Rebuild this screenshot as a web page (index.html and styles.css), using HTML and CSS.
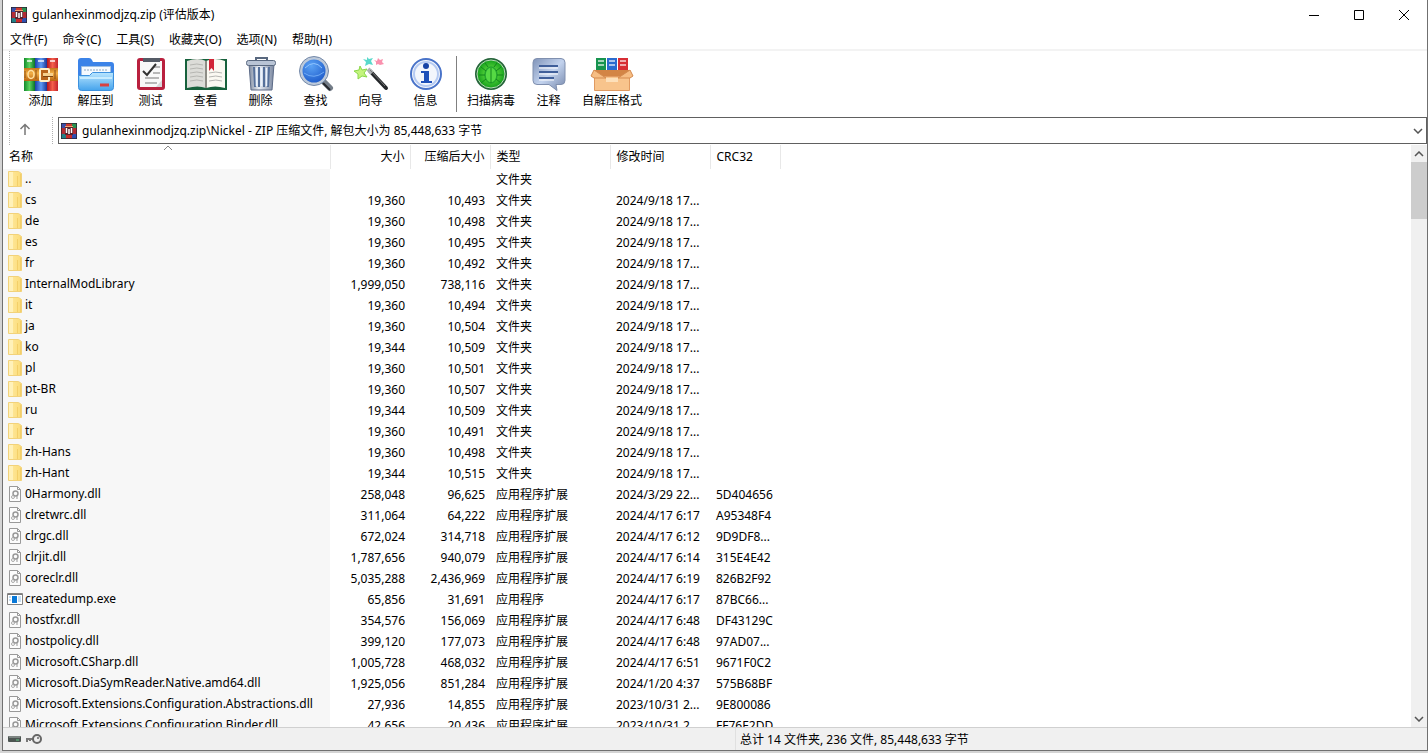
FILE: index.html
```html
<!DOCTYPE html>
<html lang="zh-CN">
<head>
  <meta charset="UTF-8">
  <meta name="viewport" content="width=device-width, initial-scale=1.0">
  <title>gulanhexinmodjzq.zip (评估版本)</title>
  <link rel="stylesheet" href="styles.css">
</head>
<body>
  <svg class="sprite" aria-hidden="true">
    <defs>
      <linearGradient id="g-red" x1="0" x2="1"><stop offset="0" stop-color="#b3141c"/><stop offset=".5" stop-color="#f4604c"/><stop offset="1" stop-color="#c3242c"/></linearGradient>
      <linearGradient id="g-green" x1="0" x2="1"><stop offset="0" stop-color="#128a2c"/><stop offset=".5" stop-color="#5cd25e"/><stop offset="1" stop-color="#0b7428"/></linearGradient>
      <linearGradient id="g-blue" x1="0" x2="1"><stop offset="0" stop-color="#1c3fa8"/><stop offset=".5" stop-color="#5d9af4"/><stop offset="1" stop-color="#1c3694"/></linearGradient>
      <linearGradient id="g-belt" x1="0" x2="0" y1="0" y2="1"><stop offset="0" stop-color="#c4761b"/><stop offset=".4" stop-color="#f3ae45"/><stop offset="1" stop-color="#b8630f"/></linearGradient>
      <linearGradient id="g-folder" x1="0" x2="0" y1="0" y2="1"><stop offset="0" stop-color="#b9e6ff"/><stop offset="1" stop-color="#45a3ec"/></linearGradient>
      <linearGradient id="g-steel" x1="0" x2="1"><stop offset="0" stop-color="#7f8ba0"/><stop offset=".4" stop-color="#e9eef5"/><stop offset="1" stop-color="#7a87a0"/></linearGradient>
      <radialGradient id="g-lens" cx=".4" cy=".3" r=".8"><stop offset="0" stop-color="#5ba3f5"/><stop offset="1" stop-color="#1450c4"/></radialGradient>
      <radialGradient id="g-virus"><stop offset="0" stop-color="#7cf04a"/><stop offset="1" stop-color="#14a01c"/></radialGradient>
      <linearGradient id="g-note" x1="0" x2="1" y1="0" y2="1"><stop offset="0" stop-color="#7f93b8"/><stop offset=".5" stop-color="#c3d3ee"/><stop offset="1" stop-color="#7486aa"/></linearGradient>
      <linearGradient id="g-yellow" x1="0" x2="1"><stop offset="0" stop-color="#ffe9a0"/><stop offset="1" stop-color="#fbdc78"/></linearGradient>
    </defs>
    <symbol id="i-rar" viewBox="0 0 34 34">
      <path fill="url(#g-green)" d="M0 1h11v11H0z"/><path fill="url(#g-blue)" d="M11 1h12v11H11z"/><path fill="url(#g-red)" d="M23 1h11v11H23z"/>
      <path fill="url(#g-green)" d="M0 22h11v12H0z"/><path fill="url(#g-blue)" d="M11 22h12v12H11z"/><path fill="url(#g-red)" d="M23 22h11v12H23z"/>
      <path d="M3 4h5M14 4h6M26 4h5" stroke="#fff" stroke-opacity=".7" stroke-width="2"/>
      <path fill="url(#g-belt)" d="M0 11h34v13H0z"/>
      <ellipse cx="7" cy="17.500" rx="3" ry="4" fill="none" stroke="#ffe0a0" stroke-width="1.500"/>
      <path stroke="#8b4e14" d="M1 14v7M12 13v9M31 13v9"/>
      <rect x="16" y="12" width="9" height="12" rx="1" fill="#b8651c" stroke="#fff0c8" stroke-width="2"/>
      <path fill="#f6d08d" d="M19 16h10v3H19z"/><path fill="#7b4412" d="M19 19h10v1H19z"/>
    </symbol>
    <symbol id="i-rar-small" viewBox="0 0 16 16">
      <path fill="#3d4fa8" d="M0 0h5v5H0z"/><path fill="#d03a30" d="M5 0h6v5H5z"/><path fill="#2b9150" d="M11 0h5v5h-5z"/>
      <path fill="#b32c34" d="M0 5h16v6H0z"/><path fill="#227f86" d="M0 11h5v5H0z"/><path fill="#c92a2a" d="M5 11h6v5H5z"/><path fill="#2f4fb0" d="M11 11h5v5h-5z"/>
      <path fill="#58242e" d="M4 4h8v8H4z"/><path d="M5.500 5v5M8 6v5M10.500 5v5" stroke="#fff" stroke-width="1.500"/><path d="M4 3.500h8" stroke="#f0a070"/>
      <path d="M0 15.500h16M0 .5h16M.5 0v16M15.500 0v16" stroke="#26222f" stroke-opacity=".7"/>
    </symbol>
    <symbol id="i-folder" viewBox="0 0 14 16">
      <path fill="url(#g-yellow)" stroke="#f2d27a" d="M.5.5h10l3 2v13H.5z"/><path fill="#fff1b9" d="M1 1h4v14H1z"/><path fill="#f3cf69" d="M9 5h1v10H9zM12 3h1v12h-1z"/>
    </symbol>
    <symbol id="i-dll" viewBox="0 0 14 16">
      <path fill="#fcfcfc" stroke="#999" d="M1.500.5h8l3 3v12h-11z"/><path fill="none" stroke="#999" d="M9.500.5v3h3"/>
      <circle cx="7.500" cy="7.500" r="2.500" fill="none" stroke="#999" stroke-width="1.500"/><circle cx="5" cy="11" r="1.500" fill="none" stroke="#aaa"/><path d="M9 10v3" stroke="#999"/>
    </symbol>
    <symbol id="i-exe" viewBox="0 0 16 14">
      <path fill="#fff" stroke="#848484" d="M.5 1.500h15v11H.5z"/><path stroke="#777" d="M1 2.500h14"/><path fill="#0878d7" d="M5 4h5v7H5z"/><path stroke="#8cbfe7" d="M2 5h2M2 8h2M11 5h3M11 7h3M11 9h3"/>
    </symbol>
  </svg>

  <div class="window">
    <header class="titlebar">
      <svg class="app-icon"><use href="#i-rar-small"/></svg>
      <h1>gulanhexinmodjzq.zip (评估版本)</h1>
      <div class="window-buttons">
        <button type="button" aria-label="最小化"><svg viewBox="0 0 12 12"><path d="M1 6.500h10"/></svg></button>
        <button type="button" aria-label="最大化"><svg viewBox="0 0 12 12"><path d="M1.500 1.500h9v9h-9z"/></svg></button>
        <button type="button" aria-label="关闭"><svg viewBox="0 0 12 12"><path d="M1 1l10 10M11 1L1 11"/></svg></button>
      </div>
    </header>

    <nav class="menu">
      <button type="button">文件(F)</button>
      <button type="button">命令(C)</button>
      <button type="button">工具(S)</button>
      <button type="button">收藏夹(O)</button>
      <button type="button">选项(N)</button>
      <button type="button">帮助(H)</button>
    </nav>

    <div class="toolbar">
      <button type="button">
        <svg viewBox="0 0 44 36"><use href="#i-rar" x="5" y="1" width="34" height="34"/></svg>
        <span>添加</span>
      </button>
      <button type="button">
        <svg viewBox="0 0 44 36"><path fill="#3b83e8" d="M4 5q0-3 3-3h8q2 0 3 2l1 2h18q3 0 3 3v20H4z"/><path fill="#f5faff" stroke="#9fbfe2" d="M7.500 10.500h29v14h-29z"/><path d="M10 14h24" stroke="#8ea7c0" stroke-dasharray="2 1"/><path fill="url(#g-folder)" stroke="#3c91df" d="M4.500 19.500h11l3-3h21v15q0 3-3 3h-29q-3 0-3-3z"/><path stroke="#c8ecff" stroke-width="2" d="M6 22h32"/><path stroke="#d94141" stroke-width="3" d="M26 29h9"/></svg>
        <span>解压到</span>
      </button>
      <button type="button">
        <svg viewBox="0 0 44 36"><rect x="8" y="2" width="28" height="32" rx="3" fill="#b9203e"/><path fill="#f8f8f8" d="M11 5h22v26H11z"/><path fill="#555b66" d="M14 2h17v4H14z"/><path d="M24 11h7M24 17h7M16 22h14M16 27h12" fill="none" stroke="#777"/><path d="M14 15l4 4 9-11" fill="none" stroke="#333" stroke-width="2"/><path fill="#d7d7da" d="M27 31l6-7v7z"/></svg>
        <span>测试</span>
      </button>
      <button type="button">
        <svg viewBox="0 0 44 36"><path fill="#17613c" d="M1 3h42v31H1z"/><path fill="#dcdcd8" d="M3 5q11-4 19 0v27q-8-3-19 0z"/><path fill="#fbf9f2" d="M22 5q9-4 19 0v27q-10-3-19 0z"/><path d="M6 9q7-2 13 0M6 13q7-2 13 0M6 17q7-2 13 0M6 21q7-2 13 0M6 25q7-2 13 0M25 17q7-2 13 0M25 21q7-2 13 0M25 25q7-2 13 0" fill="none" stroke="#b6b6b2"/><path stroke="#8d8c85" stroke-width="2" d="M22 5v27"/><path fill="#d12436" d="M25 3h5v12l-2.500-3-2.500 3z"/></svg>
        <span>查看</span>
      </button>
      <button type="button">
        <svg viewBox="0 0 44 36"><path fill="url(#g-steel)" stroke="#5c6b87" d="M10 8h25l-2 26H12z"/><path stroke="#55709b" stroke-width="2" d="M15 11l1 20M20 11v20M25 11v20M30 11l-1 20"/><path stroke="#eaf3ff" stroke-width="1.500" d="M17.500 12v18M22.500 12v18M27.500 12v18"/><rect x="7.500" y="4.500" width="29" height="5" rx="2" fill="#b9c4d5" stroke="#59687f"/><path d="M17 4V2h11v2" fill="none" stroke="#59687f" stroke-width="2"/></svg>
        <span>删除</span>
      </button>
      <button type="button">
        <svg viewBox="0 0 44 36"><path stroke="#747d88" stroke-width="6" stroke-linecap="round" d="M29 25l7 7"/><path stroke="#25282d" stroke-width="2" d="M29 27l7 7"/><circle cx="20" cy="15" r="13" fill="url(#g-lens)" stroke="#bcc9da" stroke-width="3"/><circle cx="20" cy="15" r="14.500" fill="none" stroke="#7388a8"/><path d="M10 17q10 7 20-1" stroke="#6faaf6" fill="none"/><path d="M11 12q9-9 17 0" stroke="#91c5ff" fill="none"/></svg>
        <span>查找</span>
      </button>
      <button type="button">
        <svg viewBox="0 0 44 36"><path stroke="#24272a" stroke-width="4" stroke-linecap="round" d="M21 15l16 17"/><path stroke="#aeb2b5" stroke-width="4" d="M19 13l4 4"/><path d="M21 14l15 16" stroke="#777"/><path fill="#c4f47d" stroke="#8ad84a" d="M11 10l2 4 5-1-3 4 3 4-5-1-4 3v-5l-4-3 5-1z"/><path fill="#59d9cb" d="M18 1l2 2 4-1-2 3 2 4-4-1-4 2 1-4-3-3 4 1z"/><path fill="#fa91ae" d="M29 2l2 2 3-1-1 3 2 2-4 1-2-1-2 1v-3l-2-2 3 1z"/></svg>
        <span>向导</span>
      </button>
      <button type="button">
        <svg viewBox="0 0 44 36"><circle cx="22" cy="18" r="15" fill="#f3f6fc" stroke="#4973c9" stroke-width="2"/><circle cx="22" cy="18" r="12" fill="none" stroke="#b5caf2" stroke-width="2"/><circle cx="22" cy="10" r="3" fill="#1743a6"/><path fill="#1e50b9" d="M17 15h8v10h3v2H17v-2h3v-8h-3z"/></svg>
        <span>信息</span>
      </button>
      <div class="separator"></div>
      <button type="button" class="wide">
        <svg viewBox="0 0 44 36"><circle cx="22" cy="18" r="16" fill="#25643a"/><circle cx="22" cy="18" r="14" fill="url(#g-virus)" stroke="#b6d9b6"/><ellipse cx="22" cy="19" rx="6" ry="8" fill="#56d944" stroke="#23a52d" stroke-width="1.500"/><path d="M22 12v15M17 15l-5-4M16 19h-6M17 23l-5 4M27 15l5-4M28 19h6M27 23l5 4M19 11l-3-4M25 11l3-4" fill="none" stroke="#13851d"/></svg>
        <span>扫描病毒</span>
      </button>
      <button type="button">
        <svg viewBox="0 0 44 36"><path fill="url(#g-note)" stroke="#8090af" d="M10 2.500h24q4 0 4 4v18q0 4-4 4h-5l1 6-8-6H10q-4 0-4-4v-18q0-4 4-4z"/><path stroke="#405f9a" stroke-width="2" d="M12 10h19M12 16h19M12 22h15"/><path stroke="#fff" d="M12 12h19M12 18h19M12 24h15"/></svg>
        <span>注释</span>
      </button>
      <button type="button" class="widest">
        <svg viewBox="0 0 44 36"><path fill="#17944f" d="M6 2h10v13H6z"/><path fill="#2a6bcf" d="M17 2h10v13H17z"/><path fill="#d72d35" d="M28 2h10v13H28z"/><path d="M8 5h6M8 9h6M19 5h6M19 9h6M30 5h6M30 9h6" stroke="#fff" stroke-opacity=".6" stroke-width="2"/><path fill="#d38545" d="M5 14h34v7H5z"/><path fill="#f8c48c" stroke="#e09a61" d="M4.500 20.500h35v14h-35z"/><path fill="#f6bd83" stroke="#d48a4e" d="M4 14l-3 6 3 2h12zM40 14l3 6-3 2H28z"/><path fill="#fde0ba" d="M16 22h12v4H16z"/></svg>
        <span>自解压格式</span>
      </button>
    </div>

    <div class="address-bar">
      <button type="button" class="up" aria-label="上一级"><svg viewBox="0 0 12 12"><path d="M6 12V2M1.500 6L6 1.500 10.500 6"/></svg></button>
      <div class="address">
        <svg class="app-icon"><use href="#i-rar-small"/></svg>
        <input type="text" aria-label="路径" value="gulanhexinmodjzq.zip\Nickel - ZIP 压缩文件, 解包大小为 85,448,633 字节">
        <button type="button" aria-label="展开"><svg viewBox="0 0 10 6"><path d="M1 1l4 4 4-4"/></svg></button>
      </div>
    </div>

    <main class="list">
      <div class="files">
        <table>
          <colgroup><col class="c-name"><col class="c-size"><col class="c-size"><col class="c-type"><col class="c-date"><col class="c-crc"></colgroup>
          <thead>
            <tr>
              <th>名称<svg class="sort" viewBox="0 0 10 6"><path d="M1 5l4-4 4 4"/></svg></th>
              <th>大小</th><th>压缩后大小</th><th>类型</th><th>修改时间</th><th>CRC32</th>
            </tr>
          </thead>
          <tbody>
            <tr><td><svg><use href="#i-folder"/></svg>..</td><td></td><td></td><td>文件夹</td><td></td><td></td></tr>
            <tr><td><svg><use href="#i-folder"/></svg>cs</td><td>19,360</td><td>10,493</td><td>文件夹</td><td>2024/9/18 17...</td><td></td></tr>
            <tr><td><svg><use href="#i-folder"/></svg>de</td><td>19,360</td><td>10,498</td><td>文件夹</td><td>2024/9/18 17...</td><td></td></tr>
            <tr><td><svg><use href="#i-folder"/></svg>es</td><td>19,360</td><td>10,495</td><td>文件夹</td><td>2024/9/18 17...</td><td></td></tr>
            <tr><td><svg><use href="#i-folder"/></svg>fr</td><td>19,360</td><td>10,492</td><td>文件夹</td><td>2024/9/18 17...</td><td></td></tr>
            <tr><td><svg><use href="#i-folder"/></svg>InternalModLibrary</td><td>1,999,050</td><td>738,116</td><td>文件夹</td><td>2024/9/18 17...</td><td></td></tr>
            <tr><td><svg><use href="#i-folder"/></svg>it</td><td>19,360</td><td>10,494</td><td>文件夹</td><td>2024/9/18 17...</td><td></td></tr>
            <tr><td><svg><use href="#i-folder"/></svg>ja</td><td>19,360</td><td>10,504</td><td>文件夹</td><td>2024/9/18 17...</td><td></td></tr>
            <tr><td><svg><use href="#i-folder"/></svg>ko</td><td>19,344</td><td>10,509</td><td>文件夹</td><td>2024/9/18 17...</td><td></td></tr>
            <tr><td><svg><use href="#i-folder"/></svg>pl</td><td>19,360</td><td>10,501</td><td>文件夹</td><td>2024/9/18 17...</td><td></td></tr>
            <tr><td><svg><use href="#i-folder"/></svg>pt-BR</td><td>19,360</td><td>10,507</td><td>文件夹</td><td>2024/9/18 17...</td><td></td></tr>
            <tr><td><svg><use href="#i-folder"/></svg>ru</td><td>19,344</td><td>10,509</td><td>文件夹</td><td>2024/9/18 17...</td><td></td></tr>
            <tr><td><svg><use href="#i-folder"/></svg>tr</td><td>19,360</td><td>10,491</td><td>文件夹</td><td>2024/9/18 17...</td><td></td></tr>
            <tr><td><svg><use href="#i-folder"/></svg>zh-Hans</td><td>19,360</td><td>10,498</td><td>文件夹</td><td>2024/9/18 17...</td><td></td></tr>
            <tr><td><svg><use href="#i-folder"/></svg>zh-Hant</td><td>19,344</td><td>10,515</td><td>文件夹</td><td>2024/9/18 17...</td><td></td></tr>
            <tr><td><svg><use href="#i-dll"/></svg>0Harmony.dll</td><td>258,048</td><td>96,625</td><td>应用程序扩展</td><td>2024/3/29 22...</td><td>5D404656</td></tr>
            <tr><td><svg><use href="#i-dll"/></svg>clretwrc.dll</td><td>311,064</td><td>64,222</td><td>应用程序扩展</td><td>2024/4/17 6:17</td><td>A95348F4</td></tr>
            <tr><td><svg><use href="#i-dll"/></svg>clrgc.dll</td><td>672,024</td><td>314,718</td><td>应用程序扩展</td><td>2024/4/17 6:12</td><td>9D9DF8...</td></tr>
            <tr><td><svg><use href="#i-dll"/></svg>clrjit.dll</td><td>1,787,656</td><td>940,079</td><td>应用程序扩展</td><td>2024/4/17 6:14</td><td>315E4E42</td></tr>
            <tr><td><svg><use href="#i-dll"/></svg>coreclr.dll</td><td>5,035,288</td><td>2,436,969</td><td>应用程序扩展</td><td>2024/4/17 6:19</td><td>826B2F92</td></tr>
            <tr><td><svg class="exe"><use href="#i-exe"/></svg>createdump.exe</td><td>65,856</td><td>31,691</td><td>应用程序</td><td>2024/4/17 6:17</td><td>87BC66...</td></tr>
            <tr><td><svg><use href="#i-dll"/></svg>hostfxr.dll</td><td>354,576</td><td>156,069</td><td>应用程序扩展</td><td>2024/4/17 6:48</td><td>DF43129C</td></tr>
            <tr><td><svg><use href="#i-dll"/></svg>hostpolicy.dll</td><td>399,120</td><td>177,073</td><td>应用程序扩展</td><td>2024/4/17 6:48</td><td>97AD07...</td></tr>
            <tr><td><svg><use href="#i-dll"/></svg>Microsoft.CSharp.dll</td><td>1,005,728</td><td>468,032</td><td>应用程序扩展</td><td>2024/4/17 6:51</td><td>9671F0C2</td></tr>
            <tr><td><svg><use href="#i-dll"/></svg>Microsoft.DiaSymReader.Native.amd64.dll</td><td>1,925,056</td><td>851,284</td><td>应用程序扩展</td><td>2024/1/20 4:37</td><td>575B68BF</td></tr>
            <tr><td><svg><use href="#i-dll"/></svg>Microsoft.Extensions.Configuration.Abstractions.dll</td><td>27,936</td><td>14,855</td><td>应用程序扩展</td><td>2023/10/31 2...</td><td>9E800086</td></tr>
            <tr><td><svg><use href="#i-dll"/></svg>Microsoft.Extensions.Configuration.Binder.dll</td><td>42,656</td><td>20,436</td><td>应用程序扩展</td><td>2023/10/31 2...</td><td>FF76E2DD</td></tr>
          </tbody>
        </table>
      </div>
      <div class="scrollbar">
        <button type="button" aria-label="向上"><svg viewBox="0 0 10 6"><path d="M1 5l4-4 4 4"/></svg></button>
        <div class="thumb"></div>
        <button type="button" aria-label="向下"><svg viewBox="0 0 10 6"><path d="M1 1l4 4 4-4"/></svg></button>
      </div>
    </main>

    <footer class="status">
      <div class="status-icons">
        <svg viewBox="0 0 36 12"><rect x="1" y="3" width="13" height="6" rx="1" fill="#4d5552"/><path d="M2 4h11" stroke="#aeb5b1"/><path d="M9 7h3" stroke="#62c783"/><path d="M19 6h9M20 6v3M23 6v2" stroke="#777" stroke-width="2"/><circle cx="30" cy="6" r="4" fill="#eee" stroke="#666" stroke-width="2"/><circle cx="31" cy="5" r="1" fill="#666"/></svg>
      </div>
      <div class="status-total">总计 14 文件夹, 236 文件, 85,448,633 字节</div>
    </footer>
  </div>
</body>
</html>
```
FILE: styles.css
```css
* {
  box-sizing: border-box;
}
body {
  margin: 0;
  background: #d4d4d4;
  color: #000;
  font-family: "Noto Sans", "Noto Sans CJK SC", sans-serif;
  font-size: 12px;
  line-height: 18px;
}
button {
  margin: 0;
  padding: 0;
  border: 0;
  background: none;
  color: inherit;
  font: inherit;
}
.sprite {
  position: absolute;
  width: 0;
  height: 0;
}
.window {
  display: flex;
  flex-direction: column;
  height: calc(100vh - 2px);
  margin-left: 2px;
  border: solid #707070;
  border-width: 0 1px 1px;
  background: #fff;
}

/* title and menu */
.titlebar {
  display: flex;
  align-items: center;
  gap: 5px;
  height: 30px;
  padding-left: 8px;
}
.titlebar h1 {
  margin: 0;
  font-size: 12px;
  font-weight: normal;
}
.app-icon {
  flex: none;
  width: 16px;
  height: 16px;
}
.window-buttons {
  display: flex;
  margin-left: auto;
  padding-right: 1px;
}
.window-buttons button {
  display: flex;
  align-items: center;
  justify-content: center;
  width: 45px;
  height: 28px;
}
.window-buttons svg {
  width: 12px;
  height: 12px;
  fill: none;
  stroke: #000;
}
.menu {
  display: flex;
  gap: 15px;
  height: 21px;
  padding: 1px 0 0 7px;
  border-bottom: 2px solid #f3f3f3;
}

/* toolbar */
.toolbar {
  display: flex;
  height: 65px;
  margin-left: 6px;
  padding: 5px 0 0 3px;
  border-left: 1px dotted #b0b0b0;
}
.toolbar button {
  display: flex;
  flex-direction: column;
  align-items: center;
  width: 55px;
}
.toolbar button.wide {
  width: 60px;
}
.toolbar button.widest {
  width: 72px;
}
.toolbar svg {
  flex: none;
  width: 44px;
  height: 36px;
}
.toolbar .separator {
  width: 1px;
  height: 56px;
  margin: 0 4px 0 3px;
  background: #808080;
}

/* address */
.address-bar {
  display: flex;
  height: 29px;
  margin-left: 6px;
  padding: 1px 0;
  border-left: 1px dotted #b0b0b0;
}
.up {
  width: 43px;
  padding-right: 13px;
  border-right: 1px dotted #b0b0b0;
}
.up svg {
  width: 12px;
  height: 12px;
  fill: none;
  stroke: #777;
  stroke-width: 1.5;
}
.address {
  display: flex;
  flex: 1;
  align-items: center;
  gap: 5px;
  margin-left: 5px;
  padding: 0 3px 0 2px;
  border: 1px solid #606060;
}
.address input {
  flex: 1;
  min-width: 0;
  padding: 0;
  border: 0;
  outline: 0;
  background: none;
  color: #000;
  font: inherit;
}
.address button svg,
.scrollbar svg,
.sort {
  display: block;
  width: 10px;
  height: 6px;
  fill: none;
  stroke: #555;
  stroke-width: 1.5;
}

/* file list */
.list {
  display: flex;
  flex: 1;
  min-height: 0;
}
.files {
  flex: 1;
  min-width: 0;
  overflow: hidden;
  background: linear-gradient(to right, #f7f7f7 327px, #fff 327px);
}
table {
  width: 777px;
  border-collapse: collapse;
  table-layout: fixed;
}
.c-name {
  width: 327px;
}
.c-size {
  width: 80px;
}
.c-type {
  width: 120px;
}
.c-date {
  width: 100px;
}
.c-crc {
  width: 70px;
}
th {
  position: relative;
  height: 24px;
  padding: 0 5px 0 6px;
  border-right: 1px solid #e8e8e8;
  background: #fff;
  font-weight: normal;
  text-align: left;
}
.sort {
  position: absolute;
  top: 0;
  left: 49%;
  stroke: #888;
  stroke-width: 1;
}
td {
  height: 21px;
  padding: 0 5px 0 6px;
  overflow: hidden;
  white-space: nowrap;
}
th:nth-child(2),
th:nth-child(3),
td:nth-child(2),
td:nth-child(3) {
  text-align: right;
}
td:first-child {
  padding-left: 5px;
}
td svg {
  width: 14px;
  height: 16px;
  margin: 0 3px 2px 0;
  vertical-align: middle;
}
td svg.exe {
  width: 16px;
  margin-left: -1px;
  margin-right: 2px;
}
.scrollbar {
  display: flex;
  flex-direction: column;
  width: 16px;
  background: #f0f0f0;
}
.scrollbar button {
  display: flex;
  align-items: center;
  justify-content: center;
  height: 17px;
}
.scrollbar button:last-child {
  margin-top: auto;
}
.scrollbar .thumb {
  height: 57px;
  background: #cdcdcd;
}

/* status bar */
.status {
  display: flex;
  height: 23px;
  border-top: 1px solid #d0d0d0;
  background: #f0f0f0;
  line-height: 24px;
}
.status-icons {
  display: flex;
  flex: 1;
  align-items: center;
  padding-left: 4px;
}
.status-icons svg {
  width: 36px;
  height: 12px;
}
.status-total {
  width: 692px;
  padding-left: 4px;
  border-left: 1px solid #e0e0e0;
}
```
